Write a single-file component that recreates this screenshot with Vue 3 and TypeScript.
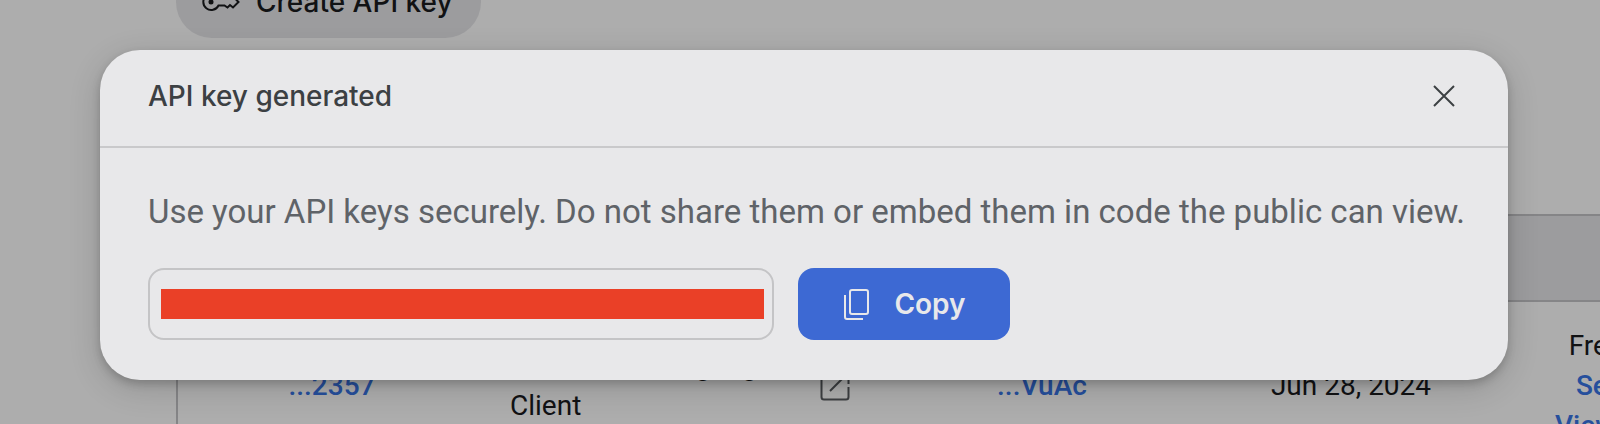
<script setup lang="ts">
import { ref } from 'vue'

interface KeyRow {
  key: string
  project: string
  projectKey: string
  created: string
  plan: string
  actions: string[]
}

const open = ref(true)
const apiKey = ref('')
const rows: KeyRow[] = [
  {
    key: '...2357',
    project: 'Generative Language Client',
    projectKey: '...VuAc',
    created: 'Jun 28, 2024',
    plan: 'Free of charge',
    actions: ['Set up Billing', 'View usage data'],
  },
]

function copyKey() {
  navigator.clipboard?.writeText(apiKey.value)
}
</script>

<template>
  <div class="screen">
    <main class="page">
      <button class="create" type="button">
        <svg class="key-icon" viewBox="0 0 38 24" aria-hidden="true">
          <path d="M16.500 8.500A8 8 0 1 0 16.500 15.500H22.500L25.500 17.500L28 15L31 17.500L36.500 12L33 8.500Z" />
          <circle class="dot" cx="9" cy="12" r="2.500" />
        </svg>
        Create API key
      </button>
      <table class="keys">
        <colgroup>
          <col class="c-key" />
          <col class="c-project" />
          <col class="c-project-key" />
          <col class="c-created" />
          <col class="c-plan" />
        </colgroup>
        <thead>
          <tr><th></th><th></th><th></th><th></th><th></th></tr>
        </thead>
        <tbody>
          <tr v-for="row in rows" :key="row.key">
            <td><a href="#">{{ row.key }}</a></td>
            <td>
              <div class="project">
                <span>{{ row.project }}</span>
                <button class="open" type="button" aria-label="Open project">
                  <svg viewBox="0 0 30 30" aria-hidden="true">
                    <path d="M13 1.500H4Q1.500 1.500 1.500 4V26Q1.500 28.500 4 28.500H26Q28.500 28.500 28.500 26V16M17 1.500H28.500V13M28.500 1.500L10 20" />
                  </svg>
                </button>
              </div>
            </td>
            <td><a href="#">{{ row.projectKey }}</a></td>
            <td>{{ row.created }}</td>
            <td>
              {{ row.plan }}
              <a v-for="action in row.actions" :key="action" class="line" href="#">{{ action }}</a>
            </td>
          </tr>
        </tbody>
      </table>
    </main>

    <div v-if="open" class="overlay">
      <section class="dialog" role="dialog" aria-labelledby="dialog-title">
        <header class="head">
          <h2 id="dialog-title">API key generated</h2>
          <button class="close" type="button" aria-label="Close" @click="open = false">
            <svg viewBox="0 0 24 24" aria-hidden="true"><path d="M2 2L22 22M22 2L2 22" /></svg>
          </button>
        </header>
        <div class="body">
          <p>Use your API keys securely. Do not share them or embed them in code the public can view.</p>
          <div class="row">
            <div class="field">
              <input v-model="apiKey" type="text" readonly aria-label="API key" />
            </div>
            <button class="copy" type="button" @click="copyKey">
              <svg viewBox="0 0 28 32" aria-hidden="true">
                <rect x="8" y="2" width="18" height="24" rx="2" />
                <path d="M3 7V29Q3 31 5 31H21" />
              </svg>
              Copy
            </button>
          </div>
        </div>
      </section>
    </div>
  </div>
</template>

<style>
body {
  background: #adadad;
  overflow: hidden;
}
</style>

<style scoped>
.screen {
  position: relative;
  height: 100vh;
  overflow: hidden;
  font-family: Roboto, "Liberation Sans", sans-serif;
  font-size: 28px;
  line-height: 40px;
  color: #111214;
}

button,
input {
  font: inherit;
  border: 0;
  margin: 0;
  padding: 0;
  background: none;
}

svg {
  display: block;
  flex: none;
  fill: none;
  stroke: currentColor;
  stroke-width: 2;
}

a {
  color: #264f9c;
  font-weight: 500;
  text-decoration: none;
}

h2,
.create,
.copy {
  font-family: Inter, "Liberation Sans", sans-serif;
}

/* The page is scrolled, so its first control is partly out of view. */
.page {
  margin-top: -34px;
  padding-left: 176px;
}

.create {
  display: flex;
  align-items: center;
  gap: 16px;
  height: 72px;
  padding: 0 28px 0 26px;
  border-radius: 36px;
  background: #9c9c9e;
  color: #111214;
  font-weight: 500;
}

.key-icon {
  width: 38px;
  height: 24px;
}

.key-icon .dot {
  fill: currentColor;
  stroke: none;
}

.keys {
  margin-top: 176px;
  width: 1644px;
  table-layout: fixed;
  border-collapse: separate;
  border-spacing: 0;
  border: 2px solid #858587;
  text-align: center;
}

.c-key { width: 308px; }
.c-project { width: 394px; }
.c-project-key { width: 324px; }
.c-created { width: 294px; }
.c-plan { width: 320px; }

th {
  height: 84px;
  padding: 0;
  background: #9c9c9e;
  border-bottom: 2px solid #858587;
}

td {
  padding: 24px 0;
}

.project {
  display: flex;
  align-items: center;
  justify-content: space-between;
  padding: 0 30px 0 24px;
  text-align: left;
}

.project span {
  max-width: 290px;
}

.open {
  color: #3c3e41;
}

.open svg {
  width: 30px;
  height: 30px;
}

.line {
  display: block;
}

.overlay {
  position: absolute;
  inset: 0;
  padding: 50px 92px 0 100px;
}

.dialog {
  border-radius: 40px;
  background: #e8e8ea;
  box-shadow: 0 4px 8px rgba(0, 0, 0, 0.18), 0 8px 32px rgba(0, 0, 0, 0.16);
}

.head {
  display: flex;
  align-items: center;
  justify-content: space-between;
  box-sizing: border-box;
  height: 98px;
  padding: 0 52px 4px 48px;
  border-bottom: 2px solid #c9c9cb;
  color: #3c4043;
}

h2 {
  margin: 0;
  font-size: 28px;
  font-weight: 500;
}

.close {
  color: inherit;
}

.close svg {
  width: 24px;
  height: 24px;
}

.body {
  padding: 40px 48px;
}

p {
  margin: 0 0 32px;
  font-size: 33px;
  line-height: 48px;
  color: #5f6368;
  white-space: nowrap;
}

.row {
  display: flex;
  gap: 24px;
}

.field {
  display: flex;
  align-items: center;
  box-sizing: border-box;
  width: 626px;
  height: 72px;
  padding: 0 8px 0 11px;
  border: 2px solid #c4c4c6;
  border-radius: 16px;
}

.field input {
  width: 100%;
  height: 30px;
  background: #ea4027;
}

.copy {
  display: flex;
  align-items: center;
  justify-content: center;
  gap: 24px;
  width: 212px;
  border-radius: 16px;
  background: #3d69d3;
  color: #e8e8ea;
  font-weight: 600;
}

.copy svg {
  width: 28px;
  height: 32px;
}
</style>
